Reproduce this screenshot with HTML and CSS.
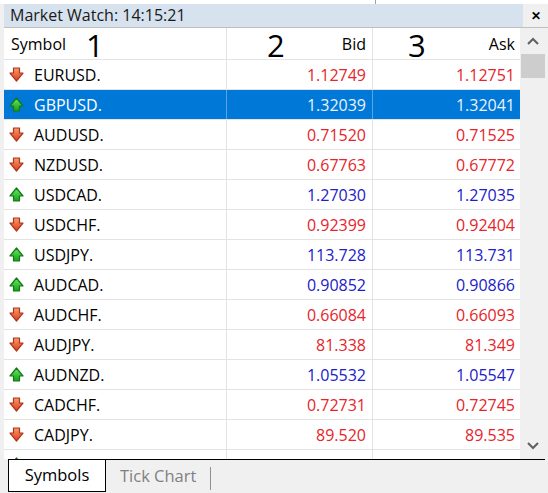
FILE: index.html
```html
<!DOCTYPE html>
<html lang="en">
<head>
  <meta charset="UTF-8">
  <title>Market Watch</title>
  <link rel="stylesheet" href="styles.css">
</head>
<body>
  <div class="top-strip"><span class="tick"></span></div>

  <div class="window">
    <div class="title-row">
      <div class="title">Market Watch: 14:15:21</div>
      <div class="close">&#x2715;</div>
    </div>

    <div class="panel">
      <div class="table-area">
        <div class="header">
          <div class="hcell hsymbol"><span>Symbol</span><span class="mark mark-1">1</span></div>
          <div class="hcell hbid"><span class="mark mark-2">2</span><span>Bid</span></div>
          <div class="hcell hask"><span class="mark mark-3">3</span><span>Ask</span></div>
        </div>
        <div id="rows" class="rows"></div>
      </div>

      <div class="scrollbar">
        <div class="sb-btn">
          <svg width="12" height="8" viewBox="0 0 12 8"><path d="M1 7 L6 2 L11 7" fill="none" stroke="#606060" stroke-width="2"/></svg>
        </div>
        <div class="sb-thumb"></div>
        <div class="sb-track"></div>
        <div class="sb-btn">
          <svg width="12" height="8" viewBox="0 0 12 8"><path d="M1 1 L6 6 L11 1" fill="none" stroke="#606060" stroke-width="2"/></svg>
        </div>
      </div>
    </div>

    <div class="tabs">
      <div class="tab active">Symbols</div>
      <div class="tab">Tick Chart</div>
      <div class="tab-sep"></div>
    </div>
  </div>

  <svg width="0" height="0" class="defs">
    <defs>
      <linearGradient id="gDown" x1="0" y1="0" x2="0" y2="1">
        <stop offset="0" stop-color="#f89a6c"/>
        <stop offset="1" stop-color="#dc3e1c"/>
      </linearGradient>
      <linearGradient id="gUp" x1="0" y1="0" x2="0" y2="1">
        <stop offset="0" stop-color="#6ee86a"/>
        <stop offset="1" stop-color="#139f13"/>
      </linearGradient>
    </defs>
  </svg>

  <script>
    const quotes = [
      ['EURUSD.', '1.12749', '1.12751', 'down'],
      ['GBPUSD.', '1.32039', '1.32041', 'up', true],
      ['AUDUSD.', '0.71520', '0.71525', 'down'],
      ['NZDUSD.', '0.67763', '0.67772', 'down'],
      ['USDCAD.', '1.27030', '1.27035', 'up'],
      ['USDCHF.', '0.92399', '0.92404', 'down'],
      ['USDJPY.', '113.728', '113.731', 'up'],
      ['AUDCAD.', '0.90852', '0.90866', 'up'],
      ['AUDCHF.', '0.66084', '0.66093', 'down'],
      ['AUDJPY.', '81.338', '81.349', 'down'],
      ['AUDNZD.', '1.05532', '1.05547', 'up'],
      ['CADCHF.', '0.72731', '0.72745', 'down'],
      ['CADJPY.', '89.520', '89.535', 'down'],
      ['CHFJPY.', '123.073', '123.088', 'up']
    ];

    const arrows = {
      down: '<svg width="15" height="15" viewBox="0 0 15 15"><path d="M4.5 1 H10.5 V6 H14 L7.5 14 L1 6 H4.5 Z" fill="url(#gDown)" stroke="#b0351a" stroke-width="1.2" stroke-linejoin="round"/></svg>',
      up: '<svg width="15" height="15" viewBox="0 0 15 15"><path d="M4.5 14 H10.5 V9 H14 L7.5 1 L1 9 H4.5 Z" fill="url(#gUp)" stroke="#137a13" stroke-width="1.2" stroke-linejoin="round"/></svg>'
    };

    const rows = document.getElementById('rows');
    quotes.forEach(q => {
      const row = document.createElement('div');
      row.className = 'row ' + q[3] + (q[4] ? ' selected' : '');
      row.innerHTML =
        '<div class="cell csymbol">' + arrows[q[3]] + '<span>' + q[0] + '</span></div>' +
        '<div class="cell cnum">' + q[1] + '</div>' +
        '<div class="cell cnum">' + q[2] + '</div>';
      rows.appendChild(row);
    });
  </script>
</body>
</html>
```

FILE: styles.css
```css
body {
  margin: 0;
  width: 548px;
  height: 493px;
  overflow: hidden;
  background: #f0f0f0;
  font-family: "Open Sans", "Noto Sans", sans-serif;
  font-size: 16px;
  color: #000;
}
.defs {
  position: absolute;
}
.top-strip {
  height: 4px;
  background: #fff;
  position: relative;
}
.tick {
  position: absolute;
  left: 375px;
  top: 0;
  width: 1px;
  height: 4px;
  background: #a0a0a0;
}
.window {
  padding-left: 4px;
}
.title-row {
  display: flex;
  height: 23px;
}
.title {
  flex: 1;
  background: #d6e2ee;
  padding-left: 6px;
  line-height: 23px;
  color: #1a1a1a;
}
.close {
  width: 25px;
  text-align: center;
  line-height: 23px;
  font-size: 12px;
  font-weight: bold;
}
.panel {
  display: flex;
  border-top: 1px solid #bfbfbf;
  height: 431px;
}
.table-area {
  width: 516px;
  background: #fff;
  overflow: hidden;
}
.header {
  display: grid;
  grid-template-columns: 222px 146px 148px;
  height: 31px;
  border-bottom: 1px solid #e3e3e3;
}
.hcell {
  display: flex;
  align-items: flex-end;
  padding-bottom: 4px;
  line-height: 22px;
}
.hbid,
.hask {
  border-left: 1px solid #e3e3e3;
  justify-content: space-between;
}
.hsymbol {
  padding-left: 7px;
}
.hbid {
  padding-right: 6px;
}
.hask {
  padding-right: 5px;
}
.mark {
  font-size: 31px;
  line-height: 28px;
  margin-bottom: -4px;
}
.mark-1 {
  margin-left: 20px;
}
.mark-2 {
  margin-left: 40px;
}
.mark-3 {
  margin-left: 35px;
}
.row {
  display: grid;
  grid-template-columns: 222px 146px 148px;
  height: 29px;
  border-bottom: 1px solid #e3e3e3;
}
.cell {
  display: flex;
  align-items: center;
}
.csymbol {
  padding-left: 5px;
  gap: 10px;
}
.csymbol svg {
  flex: none;
}
.cnum {
  justify-content: flex-end;
  border-left: 1px solid #e3e3e3;
  padding-right: 6px;
}
.cnum:last-child {
  padding-right: 5px;
}
.row.down .cnum {
  color: #e6242a;
}
.row.up .cnum {
  color: #2020c8;
}
.row.selected {
  background: #0078d7;
  color: #fff;
}
.row.selected .cnum {
  color: #eaf2fb;
  border-left-color: #5ba3e4;
}
.scrollbar {
  width: 24px;
  display: flex;
  flex-direction: column;
  padding-left: 1px;
}
.sb-btn {
  height: 26px;
  display: flex;
  align-items: center;
  justify-content: center;
}
.sb-thumb {
  height: 24px;
  background: #cdcdcd;
}
.sb-track {
  flex: 1;
}
.tabs {
  display: flex;
  align-items: stretch;
  height: 33px;
  margin-left: 4px;
  margin-right: 3px;
  border-top: 1px solid #000;
}
.tab {
  padding: 0 14px;
  line-height: 32px;
  color: #808080;
  font-size: 16.5px;
}
.tab.active {
  width: 98px;
  box-sizing: border-box;
  background: #fff;
  color: #000;
  border: 1px solid #000;
  border-top: none;
  height: 32px;
  text-align: center;
  padding: 0;
  line-height: 30px;
}
.tab-sep {
  width: 1px;
  background: #909090;
  margin: 7px 0 3px 0;
}
```
